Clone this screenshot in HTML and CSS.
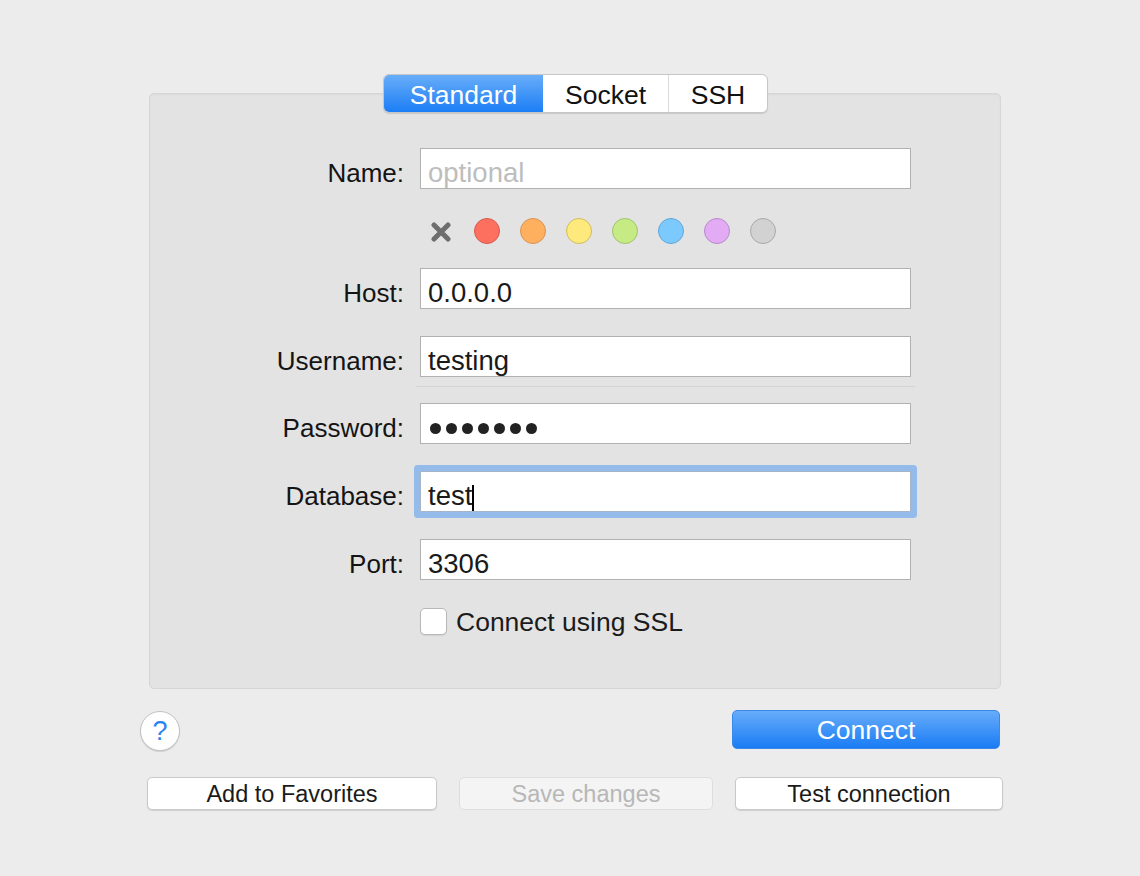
FILE: index.html
```html
<!DOCTYPE html>
<html>
<head>
<meta charset="utf-8">
<link rel="stylesheet" href="styles.css">
</head>
<body>
<div class="window">
  <div class="tabs-row">
    <div class="tabs">
      <span class="tab tab-standard active">Standard</span>
      <span class="tab tab-socket">Socket</span>
      <span class="tab tab-ssh">SSH</span>
    </div>
  </div>
  <div class="panel">
    <div class="row">
      <label class="label">Name:</label>
      <div class="field placeholder">optional</div>
    </div>
    <div class="row row-colors">
      <span class="label"></span>
      <div class="colors">
        <span class="swatch none">
          <svg width="22" height="20" viewBox="0 0 22 20"><path d="M4 3 L18 17 M18 3 L4 17" stroke="#6e6e6e" stroke-width="5" stroke-linecap="round"/></svg>
        </span>
        <span class="swatch dot red"></span>
        <span class="swatch dot orange"></span>
        <span class="swatch dot yellow"></span>
        <span class="swatch dot green"></span>
        <span class="swatch dot blue"></span>
        <span class="swatch dot purple"></span>
        <span class="swatch dot gray"></span>
      </div>
    </div>
    <div class="row row-host">
      <label class="label">Host:</label>
      <div class="field">0.0.0.0</div>
    </div>
    <div class="row row-gap">
      <label class="label">Username:</label>
      <div class="field">testing</div>
    </div>
    <div class="separator"></div>
    <div class="row row-password">
      <label class="label">Password:</label>
      <div class="field password">
        <span class="pw"></span><span class="pw"></span><span class="pw"></span><span class="pw"></span><span class="pw"></span><span class="pw"></span><span class="pw"></span>
      </div>
    </div>
    <div class="row row-gap">
      <label class="label">Database:</label>
      <div class="field focused">test<span class="caret"></span></div>
    </div>
    <div class="row row-gap">
      <label class="label">Port:</label>
      <div class="field">3306</div>
    </div>
    <div class="row row-ssl">
      <span class="label"></span>
      <div class="check">
        <span class="checkbox"></span>
        <span class="check-text">Connect using SSL</span>
      </div>
    </div>
  </div>
  <div class="actions">
    <span class="help">?</span>
    <span class="btn-primary">Connect</span>
  </div>
  <div class="buttons">
    <span class="btn btn-fav">Add to Favorites</span>
    <span class="btn btn-save disabled">Save changes</span>
    <span class="btn btn-test">Test connection</span>
  </div>
</div>
</body>
</html>
```

FILE: styles.css
```css
html, body {
  margin: 0;
  padding: 0;
}
body {
  background: #ececec;
  font-family: "Liberation Sans", Arial, sans-serif;
  color: #1b1b1b;
  width: 1140px;
  height: 876px;
  overflow: hidden;
}
.window {
  padding: 74px 0 0 149px;
  width: 852px;
}
.tabs-row {
  display: flex;
  justify-content: center;
  position: relative;
  z-index: 2;
  padding-left: 1px;
}
.tabs {
  display: flex;
  height: 39px;
  box-sizing: border-box;
  border: 1px solid #c6c6c6;
  border-radius: 6px;
  background: #fff;
  box-shadow: 0 1px 1px rgba(0,0,0,0.12);
  overflow: hidden;
}
.tab {
  display: flex;
  align-items: center;
  justify-content: center;
  font-size: 26.5px;
  padding-top: 3px;
  color: #111;
  box-sizing: border-box;
}
.tab-standard { width: 159px; }
.tab-socket { width: 126px; border-right: 1px solid #dadada; }
.tab-ssh { width: 98px; }
.tab.active {
  color: #fff;
  background: linear-gradient(#68adf9, #1c7ef5);
}
.panel {
  margin-top: -20px;
  background: #e3e3e3;
  border: 1px solid #d6d6d6;
  border-radius: 5px;
  padding: 54px 0 53px 0;
  box-shadow: inset 0 1px 2px rgba(0,0,0,0.04);
}
.row {
  display: flex;
  align-items: flex-start;
  gap: 16px;
}
.label {
  width: 254px;
  flex: none;
  text-align: right;
  font-size: 26px;
  color: #141414;
  height: 41px;
  box-sizing: border-box;
  padding-top: 8px;
  line-height: 35px;
}
.field {
  width: 491px;
  height: 41px;
  box-sizing: border-box;
  background: #fff;
  border: 1px solid #b1b1b1;
  padding: 7px 0 0 7px;
  font-size: 27.5px;
  line-height: 33px;
  color: #1a1a1a;
  white-space: nowrap;
}
.field.placeholder {
  color: #bdbdbd;
}
.field.password {
  display: flex;
  align-items: center;
  gap: 5px;
  padding: 9px 0 0 9px;
}
.pw {
  width: 11px;
  height: 11px;
  border-radius: 50%;
  background: #222;
}
.field.focused {
  border-color: #a5b4c6;
  border-radius: 1px;
  box-shadow: 0 0 0 6px #94bbe9;
}
.caret {
  display: inline-block;
  width: 2px;
  height: 26px;
  background: #000;
  vertical-align: -6px;
}
.row-colors {
  margin-top: 29px;
}
.row-colors .label {
  height: 26px;
}
.colors {
  display: flex;
  gap: 20px;
  padding-left: 8px;
}
.swatch {
  width: 26px;
  height: 26px;
  box-sizing: border-box;
  display: flex;
  align-items: center;
  justify-content: center;
}
.swatch.none svg {
  flex: none;
  margin-top: 1px;
}
.dot {
  border-radius: 50%;
  border: 1.5px solid;
}
.red { background: #fd6f5e; border-color: #d65a4c; }
.orange { background: #feb05f; border-color: #d99352; }
.yellow { background: #fde97c; border-color: #d3bc5c; }
.green { background: #c6eb85; border-color: #9fc46a; }
.blue { background: #7ccafd; border-color: #5ea6da; }
.purple { background: #e3abf4; border-color: #b889cc; }
.gray { background: #d2d2d2; border-color: #a9a9a9; }
.row-host {
  margin-top: 24px;
}
.row-gap {
  margin-top: 27px;
}
.separator {
  margin: 9px 0 0 266px;
  width: 499px;
  height: 1px;
  background: #d4d4d4;
}
.row-password {
  margin-top: 16px;
}
.row-ssl {
  margin-top: 28px;
  height: 27px;
}
.row-ssl .label {
  height: 27px;
}
.check {
  display: flex;
  align-items: center;
  gap: 9px;
  height: 27px;
}
.checkbox {
  width: 27px;
  height: 27px;
  box-sizing: border-box;
  background: #fff;
  border: 1px solid #b8b8b8;
  border-radius: 5px;
  box-shadow: 0 1px 1px rgba(0,0,0,0.08);
}
.check-text {
  font-size: 26.5px;
  color: #1b1b1b;
  line-height: 27px;
  position: relative;
  top: 1px;
}
.actions {
  margin-top: 21px;
  display: flex;
  justify-content: space-between;
  align-items: flex-start;
}
.help {
  margin-left: -9px;
  margin-top: 1px;
  width: 40px;
  height: 40px;
  box-sizing: border-box;
  border-radius: 50%;
  background: #fff;
  border: 1px solid #c2c2c2;
  box-shadow: 0 1px 1px rgba(0,0,0,0.12);
  display: flex;
  align-items: center;
  justify-content: center;
  color: #2a82f4;
  font-size: 27px;
  line-height: 1;
  padding-top: 1px;
}
.btn-primary {
  width: 268px;
  height: 39px;
  box-sizing: border-box;
  margin-right: 1px;
  border-radius: 5px;
  background: linear-gradient(#67acfa, #1a7cf4);
  border: 1px solid #3c87ec;
  color: #fff;
  font-size: 26.5px;
  padding-top: 2px;
  display: flex;
  align-items: center;
  justify-content: center;
}
.buttons {
  margin: 26px -2px 0 -2px;
  display: flex;
  gap: 22px;
}
.btn {
  height: 33px;
  box-sizing: border-box;
  background: #fff;
  border: 1px solid #c9c9c9;
  border-radius: 5px;
  box-shadow: 0 1px 1px rgba(0,0,0,0.12);
  font-size: 23.5px;
  padding-top: 2px;
  color: #1a1a1a;
  display: flex;
  align-items: center;
  justify-content: center;
}
.btn-fav { width: 290px; }
.btn-save { width: 254px; }
.btn-test { width: 268px; }
.btn.disabled {
  background: #f4f4f4;
  border-color: #dedede;
  color: #b7b7b7;
  box-shadow: none;
}
```
